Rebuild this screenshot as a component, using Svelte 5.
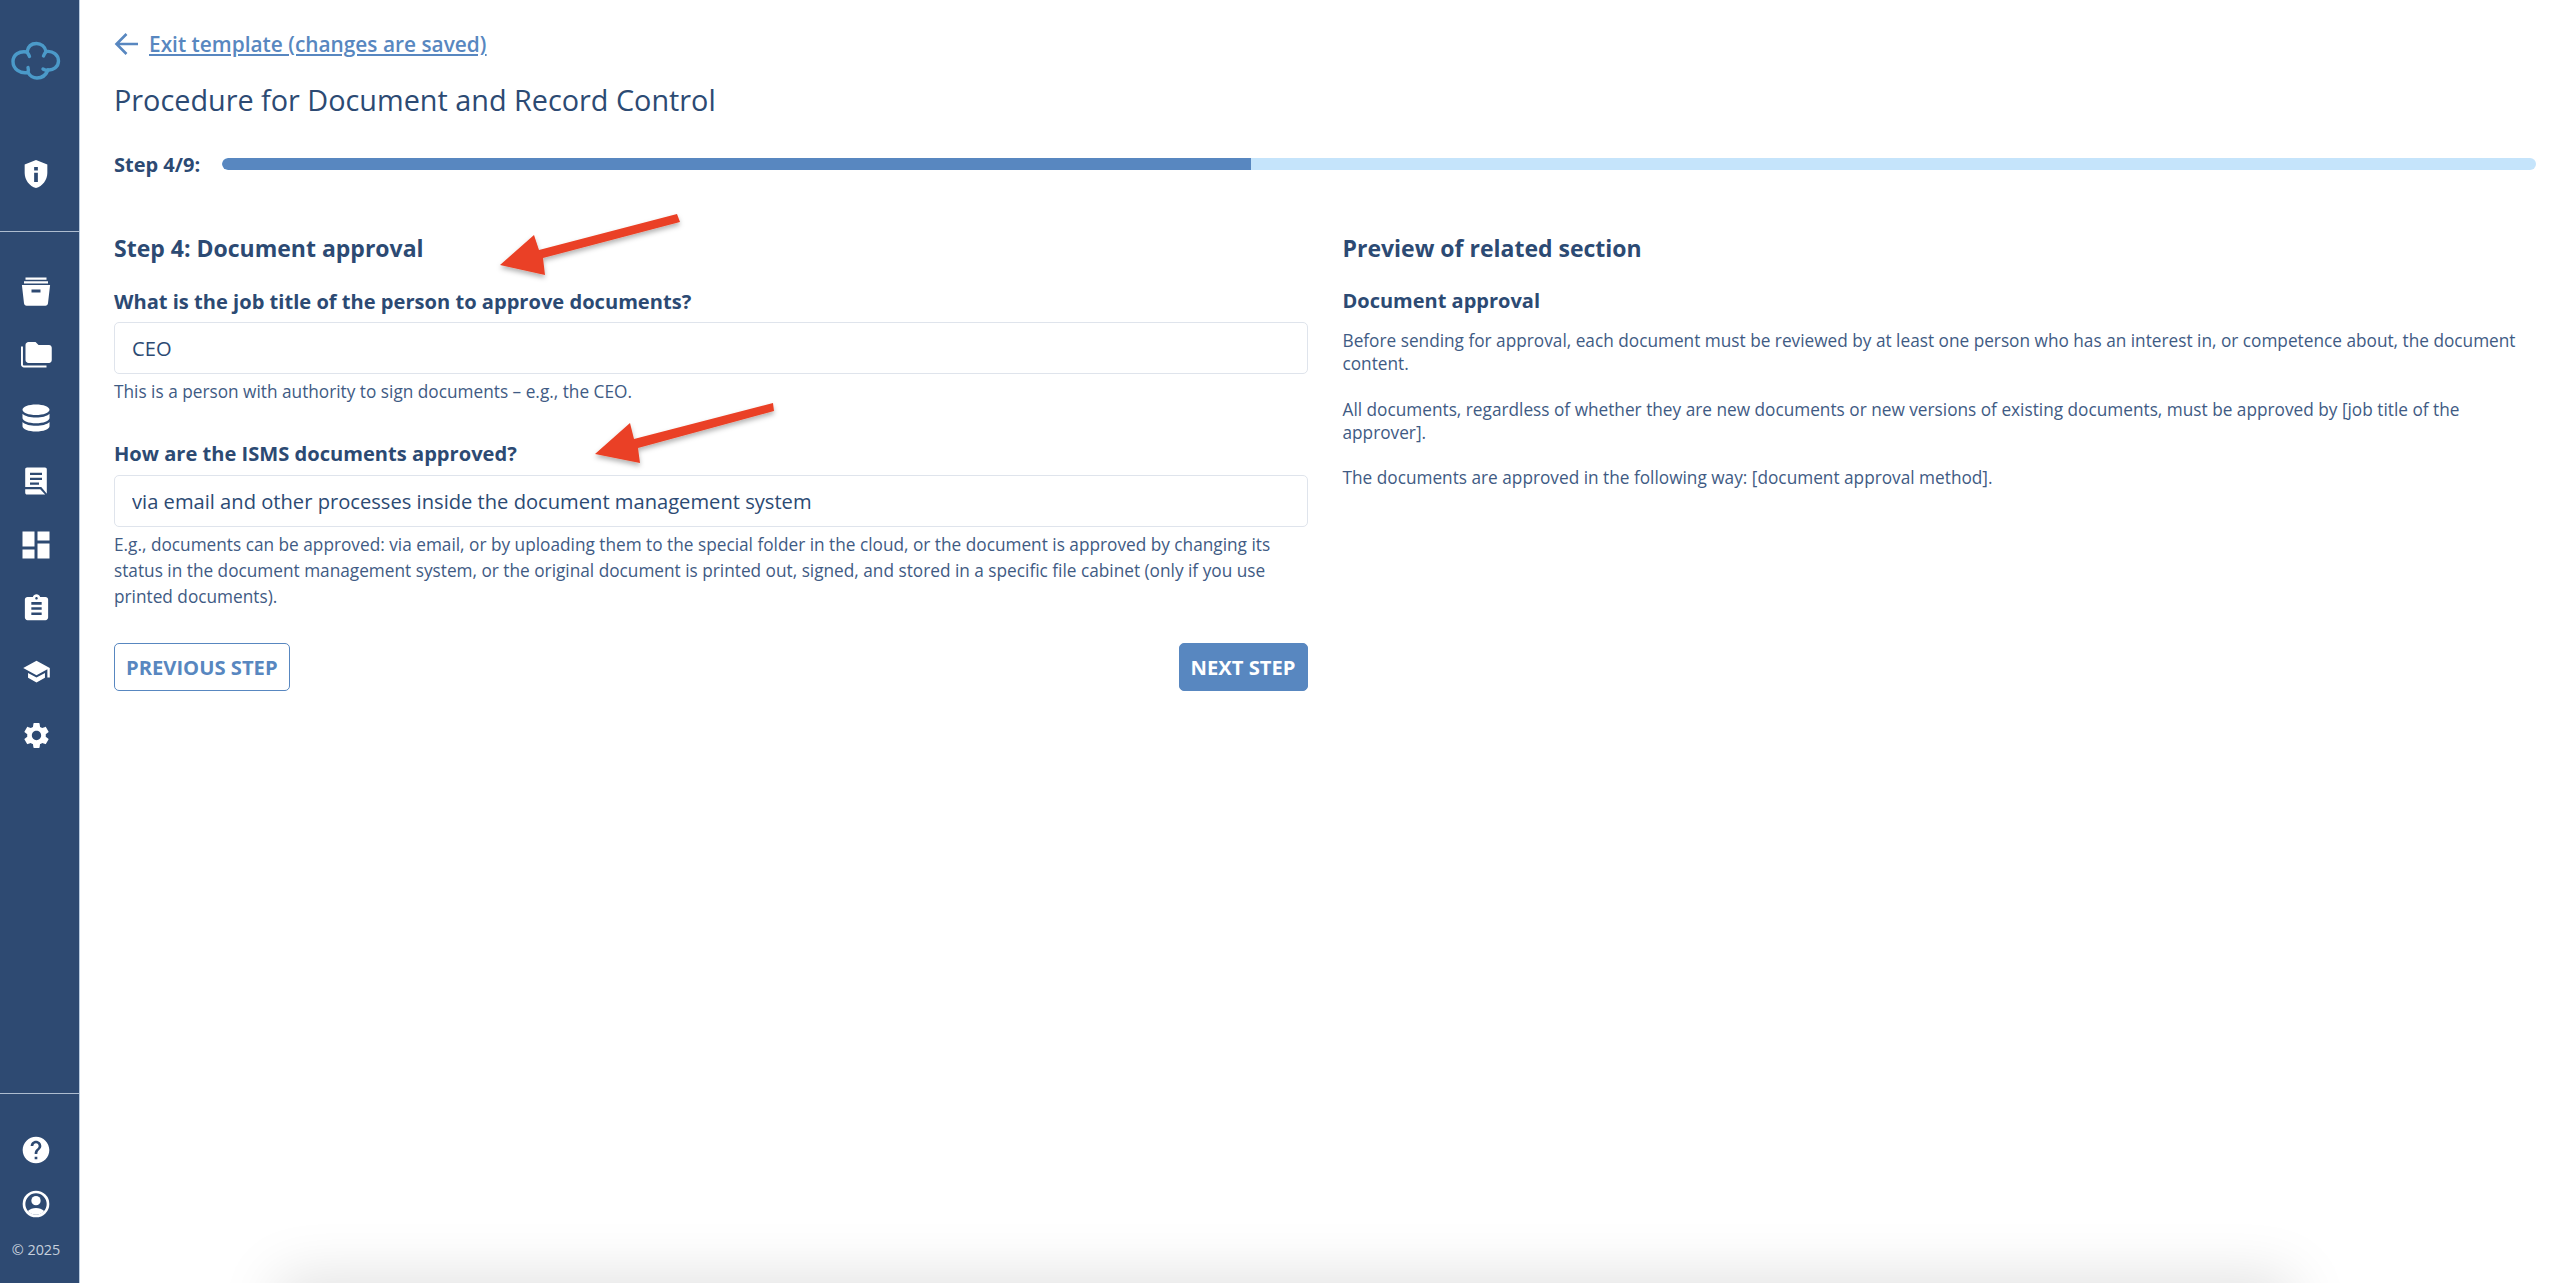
<script>
  const nav = [
    { size: 36, vb: '0 0 24 24', d: 'M5 3h14v1.500H5zM4 5.500h16V7H4zM2.600 8h18.800L20 20.200c-.1.900-.8 1.600-1.700 1.600H5.700c-.9 0-1.600-.7-1.700-1.600L2.600 8zM9 11v2h6v-2H9z' },
    { size: 36, vb: '0 0 24 24', d: 'M3 7H2v12c0 1.100.9 2 2 2h15v-1.300H4c-.4 0-.7-.3-.7-.7V7H3zM20.700 6h-7l-2-2H7c-1.100 0-2 .9-2 2v10c0 1.100.9 2 2 2h13.700c1.100 0 1.800-.9 1.800-2V7.800c0-1-.8-1.800-1.800-1.800z' },
    { size: 36, vb: '0 0 24 24', d: 'M12 3c4.900 0 9 1.500 9 3.500S16.900 10 12 10 3 8.500 3 6.500 7.100 3 12 3zM3 9.200C4.800 11 8.200 11.700 12 11.700s7.200-.7 9-2.500v2.800c0 2-4.100 3.500-9 3.500S3 14 3 12V9.200zM3 14.700c1.800 1.800 5.200 2.500 9 2.500s7.200-.7 9-2.500v2.800c0 2-4.100 3.500-9 3.500s-9-1.500-9-3.500v-2.800z' },
    { size: 36, vb: '0 0 24 24', d: 'M6 3h12c.7 0 1.200.5 1.200 1.200v16.300L15.500 16H4.800V4.200C4.800 3.500 5.300 3 6 3zM8 6.500v1.500h8V6.500H8zM8 9.800v1.500h8V9.800H8zM8 13v1.500h6V13H8zM4.800 17.500H14.800l3.300 3.500H6c-.7 0-1.200-.5-1.200-1.200v-2.300z' },
    { size: 36, vb: '0 0 24 24', d: 'M3 13h8V3H3v10zm0 8h8v-6H3v6zm10 0h8V11h-8v10zm0-18v6h8V3h-8z' },
    { size: 31, vb: '0 0 24 24', d: 'M19 3h-4.180C14.400 1.840 13.300 1 12 1c-1.300 0-2.400.84-2.820 2H5c-1.100 0-2 .9-2 2v14c0 1.100.9 2 2 2h14c1.100 0 2-.9 2-2V5c0-1.100-.9-2-2-2zm-7 0c.55 0 1 .45 1 1s-.45 1-1 1-1-.45-1-1 .45-1 1-1zm4 14H8v-2h8v2zm0-4H8v-2h8v2zm0-4H8V7h8v2z' },
    { size: 29, vb: '0 0 24 24', d: 'M5 13.180v4L12 21l7-3.820v-4L12 17l-7-3.820zM12 3 1 9l11 6 9-4.910V17h2V9L12 3z' },
    { size: 31, vb: '0 0 24 24', d: 'M19.140 12.940c.04-.3.06-.61.06-.94 0-.32-.02-.64-.07-.94l2.030-1.580c.18-.14.23-.41.12-.61l-1.920-3.320c-.12-.22-.37-.29-.59-.22l-2.390.96c-.5-.38-1.030-.7-1.620-.94l-.36-2.540c-.04-.24-.24-.41-.48-.41h-3.840c-.24 0-.43.17-.47.41l-.36 2.540c-.59.24-1.130.57-1.620.94l-2.390-.96c-.22-.08-.47 0-.59.22L2.740 8.870c-.12.21-.08.47.12.61l2.030 1.580c-.05.3-.09.63-.09.94s.02.64.07.94l-2.030 1.580c-.18.14-.23.41-.12.61l1.920 3.320c.12.22.37.29.59.22l2.390-.96c.5.38 1.030.7 1.620.94l.36 2.540c.05.24.24.41.48.41h3.840c.24 0 .44-.17.47-.41l.36-2.540c.59-.24 1.130-.56 1.620-.94l2.390.96c.22.08.47 0 .59-.22l1.920-3.320c.12-.22.07-.47-.12-.61l-2.010-1.580zM12 15.600c-1.980 0-3.600-1.620-3.600-3.600s1.620-3.600 3.600-3.600 3.600 1.620 3.600 3.600-1.620 3.600-3.600 3.600z' }
  ];
  const progress = 44.45;
</script>

<div class="page">
  <aside class="side">
    <div class="brand">
      <svg width="52" height="40" viewBox="0 0 50 40" fill="none" stroke="#4b9ac9" stroke-width="3.400" stroke-linecap="round" stroke-linejoin="round">
        <path d="M16 11C17 5 21 2.500 25.500 2.500S34 5.500 35 10.500C42 9.500 47.500 14 47.500 20S42 29.500 37 29C35 34 31 37 26 37c-4 0-7-2-9-5.500C9 33 2 28 2 20.500 2 14 8 9.500 16 11z"/>
        <path d="M16 11c1 1.500 2 3 2.500 4.500M35 10.500c-1 1.500-2 3-2.500 4.500M17 31.500c.5-2 .5-3.500 0-5M37 29c-2 .5-3.500 0-5-1"/>
      </svg>
    </div>
    <div class="shield">
      <svg width="32" height="32" viewBox="0 0 24 24"><path fill="#fff" fill-rule="evenodd" d="M12 1.500 3.500 4.800v6.400c0 5.200 3.600 9.900 8.500 11.300 4.900-1.400 8.500-6.100 8.500-11.300V4.800L12 1.500zM10.600 6.800h2.800v2.600h-2.800zM10.600 11h2.800v7h-2.800z"/></svg>
    </div>
    <nav class="menu">
      {#each nav as item}
        <div class="menu-item">
          <svg width={item.size} height={item.size} viewBox={item.vb}><path fill="#fff" fill-rule="evenodd" d={item.d}/></svg>
        </div>
      {/each}
    </nav>
    <div class="foot">
      <svg class="foot-icon" width="32" height="32" viewBox="0 0 24 24"><path fill="#fff" d="M12 2C6.480 2 2 6.480 2 12s4.480 10 10 10 10-4.480 10-10S17.520 2 12 2zm1 17h-2v-2h2v2zm2.070-7.750-.9.92C13.450 12.900 13 13.500 13 15h-2v-.5c0-1.100.45-2.100 1.170-2.830l1.240-1.260c.37-.36.59-.86.59-1.410 0-1.100-.9-2-2-2s-2 .9-2 2H8c0-2.210 1.790-4 4-4s4 1.790 4 4c0 .88-.36 1.680-.93 2.250z"/></svg>
      <svg class="foot-icon" width="32" height="32" viewBox="0 0 24 24"><path fill="#fff" fill-rule="evenodd" d="M12 2a10 10 0 1 0 0 20 10 10 0 0 0 0-20zm0 2a8 8 0 1 1 0 16 8 8 0 0 1 0-16z"/><circle cx="12" cy="9.500" r="3.500" fill="#fff"/><path fill="#fff" d="M5.900 17.200C7.500 15.800 9.600 15 12 15s4.500.8 6.100 2.200A8 8 0 0 1 12 20a8 8 0 0 1-6.100-2.800z"/></svg>
      <div class="copy">© 2025</div>
    </div>
  </aside>

  <main class="main">
    <a class="exit" href="#exit">
      <svg width="26" height="24" viewBox="0 0 26 24" fill="none" stroke="#5887c0" stroke-width="2.600"><path d="M24 12H3M12.500 2 2.500 12l10 10"/></svg>
      <span>Exit template (changes are saved)</span>
    </a>
    <h1>Procedure for Document and Record Control</h1>
    <div class="progress-row">
      <strong>Step 4/9:</strong>
      <div class="track"><div class="fill" style="width: {progress}%"></div></div>
    </div>
    <div class="cols">
      <section>
        <h2>Step 4: Document approval</h2>
        <label class="first" for="job">What is the job title of the person to approve documents?</label>
        <input id="job" value="CEO" />
        <p class="help">This is a person with authority to sign documents – e.g., the CEO.</p>
        <label class="second" for="how">How are the ISMS documents approved?</label>
        <input id="how" value="via email and other processes inside the document management system" />
        <p class="help">E.g., documents can be approved: via email, or by uploading them to the special folder in the cloud, or the document is approved by changing its status in the document management system, or the original document is printed out, signed, and stored in a specific file cabinet (only if you use printed documents).</p>
        <div class="actions">
          <button class="prev">PREVIOUS STEP</button>
          <button class="next">NEXT STEP</button>
        </div>
      </section>
      <section>
        <h2>Preview of related section</h2>
        <h3>Document approval</h3>
        <p class="body">Before sending for approval, each document must be reviewed by at least one person who has an interest in, or competence about, the document content.</p>
        <p class="body">All documents, regardless of whether they are new documents or new versions of existing documents, must be approved by [job title of the approver].</p>
        <p class="body">The documents are approved in the following way: [document approval method].</p>
      </section>
    </div>
  </main>

  <svg class="arrows" width="2560" height="1283" viewBox="0 0 2560 1283">
    <defs>
      <filter id="sh" x="-20%" y="-20%" width="140%" height="150%"><feDropShadow dx="0" dy="3" stdDeviation="2.500" flood-color="#000" flood-opacity=".3"/></filter>
    </defs>
    <polygon filter="url(#sh)" fill="#ea4125" points="677,214 680,222 543,258 545,275 500,265 534,235 539,250"/>
    <polygon filter="url(#sh)" fill="#ea4125" points="773,403 774,411 638,448 640,463 595,454 630,423 634,439"/>
  </svg>
  <div class="sheet"></div>
</div>

<style>
  :global(body) { margin: 0; background: #fff; }
  .page { position: relative; display: flex; height: 1283px; overflow: hidden; font-family: "Open Sans", sans-serif; color: #2c4a73; background: #fff; }
  .side { width: 79px; flex: none; display: flex; flex-direction: column; align-items: stretch; background: #2e4a72; border-right: 1px solid #b9cbe0; }
  .brand { height: 43px; margin-top: 41px; padding-right: 7px; display: flex; justify-content: center; }
  .shield { height: 32px; margin-top: 74px; padding-right: 7px; display: flex; justify-content: center; }
  .menu { margin-top: 41px; padding-top: 27px; border-top: 1px solid #aebdd0; display: flex; flex-direction: column; }
  .menu-item { height: 63.500px; padding-right: 7px; display: flex; align-items: center; justify-content: center; }
  .foot { margin-top: auto; border-top: 1px solid #aebdd0; padding-right: 7px; display: flex; flex-direction: column; align-items: center; height: 189px; }
  .foot-icon { margin-top: 40px; margin-bottom: -1px; flex: none; }
  .foot-icon + .foot-icon { margin-top: 23px; }
  .copy { margin-top: 21px; font-size: 14.400px; line-height: 20px; color: #c6d0dd; }
  .main { flex: 1; min-width: 0; padding: 28px 24px 0 34px; }
  .exit { display: flex; align-items: center; gap: 9px; height: 32px; color: #5887c0; font-size: 20.850px; font-weight: 600; }
  .exit span { text-decoration: underline; }
  h1 { margin: 20px 0 0; font-size: 28.800px; line-height: 40px; font-weight: 400; }
  .progress-row { display: flex; align-items: center; gap: 18px; margin-top: 24px; height: 40px; font-size: 20px; }
  .progress-row strong { font-weight: 700; width: 90px; white-space: nowrap; }
  .track { flex: 1; height: 12px; border-radius: 6px; background: #c5e4fb; overflow: hidden; }
  .fill { height: 100%; background: #5887c0; border-radius: 6px 0 0 6px; }
  .cols { display: grid; grid-template-columns: 1fr 1fr; gap: 35px; margin-top: 44px; }
  h2 { margin: 0 0 19px; font-size: 23px; line-height: 40px; font-weight: 700; }
  h3 { margin: 0 0 14px; font-size: 20px; line-height: 28px; font-weight: 700; }
  label { display: block; font-size: 20.100px; line-height: 28px; font-weight: 700; margin-bottom: 7px; }
  label.first { margin-top: 20px; margin-bottom: 6px; }
  label.second { margin-top: 35px; }
  input { display: block; box-sizing: border-box; width: 100%; height: 52px; padding: 0 17px; border: 1px solid #dfe4ec; border-radius: 5px; font: 400 20.150px "Open Sans", sans-serif; color: #2c4a73; background: #fff; }
  .help { margin: 5px 0 0; font-size: 17.240px; line-height: 26px; color: #3f5b84; }
  .actions { display: flex; justify-content: space-between; margin-top: 33px; }
  button { height: 48px; box-sizing: border-box; border-radius: 5px; font: 700 20.200px "Open Sans", sans-serif; padding: 0 11px; }
  .prev { background: #fff; border: 1px solid #5887c0; color: #5887c0; }
  .next { background: #5887c0; border: 1px solid #5887c0; color: #fff; }
  .body { margin: 0 0 22.500px; font-size: 17.240px; line-height: 23px; color: #3f5b84; }
  .arrows { position: absolute; left: 0; top: 0; pointer-events: none; }
  .sheet { position: absolute; left: 290px; width: 1990px; top: 1290px; height: 40px; box-shadow: 0 0 60px 12px rgba(0,0,0,.13); }
</style>
